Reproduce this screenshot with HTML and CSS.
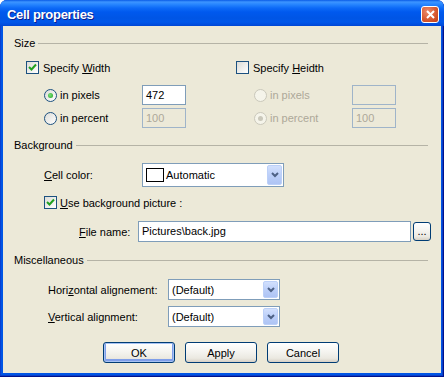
FILE: index.html
```html
<!DOCTYPE html>
<html lang="en">
<head>
  <meta charset="UTF-8">
  <title>Cell properties</title>
  <link rel="stylesheet" href="styles.css">
</head>
<body>
  <div class="window">
    <div class="titlebar">
      <span class="title">Cell properties</span>
      <span class="close-btn">
        <svg width="9" height="9" viewBox="0 0 9 9"><path d="M1 1L8 8M8 1L1 8" stroke="#fff" stroke-width="2"/></svg>
      </span>
    </div>

    <div class="client">
      <div class="group-head"><span>Size</span></div>
      <div class="size-grid">
        <div class="size-col">
          <div class="check-row">
            <span class="checkbox"><svg width="11" height="11" viewBox="0 0 11 11"><polyline points="2,5 4.5,7.5 9,2.5" fill="none" stroke="#21a121" stroke-width="2"/></svg></span>
            <span>Specify <u>W</u>idth</span>
          </div>
          <div class="radio-rows">
            <div class="radio-row">
              <span class="radio-label"><span class="radio"><span class="dot"></span></span>in pixels</span>
              <span class="textbox">472</span>
            </div>
            <div class="radio-row">
              <span class="radio-label"><span class="radio"></span>in percent</span>
              <span class="textbox disabled">100</span>
            </div>
          </div>
        </div>
        <div class="size-col">
          <div class="check-row">
            <span class="checkbox"></span>
            <span>Specify <u>H</u>eidth</span>
          </div>
          <div class="radio-rows off">
            <div class="radio-row">
              <span class="radio-label"><span class="radio"></span>in pixels</span>
              <span class="textbox disabled"></span>
            </div>
            <div class="radio-row">
              <span class="radio-label"><span class="radio"><span class="dot"></span></span>in percent</span>
              <span class="textbox disabled">100</span>
            </div>
          </div>
        </div>
      </div>

      <div class="group-head bg-head"><span>Background</span></div>
      <div class="form-row color-row">
        <span class="field-label color-label"><u>C</u>ell color:</span>
        <span class="combo color-combo">
          <span class="swatch"></span>
          <span class="combo-text">Automatic</span>
          <span class="combo-btn"><svg width="8" height="6" viewBox="0 0 8 6"><polyline points="1,1 4,4 7,1" fill="none" stroke="#4d6185" stroke-width="2"/></svg></span>
        </span>
      </div>
      <div class="check-row pic-row">
        <span class="checkbox"><svg width="11" height="11" viewBox="0 0 11 11"><polyline points="2,5 4.5,7.5 9,2.5" fill="none" stroke="#21a121" stroke-width="2"/></svg></span>
        <span><u>U</u>se background picture :</span>
      </div>
      <div class="form-row file-row">
        <span class="field-label file-label"><u>F</u>ile name:</span>
        <span class="textbox file-box">Pictures\back.jpg</span>
        <span class="btn browse-btn">...</span>
      </div>

      <div class="group-head misc-head"><span>Miscellaneous</span></div>
      <div class="form-row align-row">
        <span class="field-label align-label">Hori<u>z</u>ontal alignement:</span>
        <span class="combo align-combo">
          <span class="combo-text">(Default)</span>
          <span class="combo-btn"><svg width="8" height="6" viewBox="0 0 8 6"><polyline points="1,1 4,4 7,1" fill="none" stroke="#4d6185" stroke-width="2"/></svg></span>
        </span>
      </div>
      <div class="form-row align-row second">
        <span class="field-label align-label"><u>V</u>ertical alignment:</span>
        <span class="combo align-combo">
          <span class="combo-text">(Default)</span>
          <span class="combo-btn"><svg width="8" height="6" viewBox="0 0 8 6"><polyline points="1,1 4,4 7,1" fill="none" stroke="#4d6185" stroke-width="2"/></svg></span>
        </span>
      </div>

      <div class="buttons">
        <span class="btn default">OK</span>
        <span class="btn">Apply</span>
        <span class="btn">Cancel</span>
      </div>
    </div>
  </div>
</body>
</html>
```

FILE: styles.css
```css
body {
  margin: 0;
  background: #fff;
  font-family: "Liberation Sans", Arial, sans-serif;
  font-size: 11px;
  color: #000;
}

.window {
  width: 444px;
  height: 377px;
  display: flex;
  flex-direction: column;
  background: #0055e5;
  border-radius: 7px 7px 0 0;
  box-shadow: inset -1px -1px 0 #00138c, inset -2px -2px 0 #0a3fc9, inset 1px 0 0 #0a3fd0;
  overflow: hidden;
}

.titlebar {
  height: 26px;
  flex: none;
  display: flex;
  align-items: center;
  padding: 2px 5px 0 7px;
  box-sizing: border-box;
  background: linear-gradient(to bottom, #0a5be6 0, #3d95ff 2px, #2a88ff 4px, #0d6af7 8px, #0059ee 12px, #0055e5 18px, #0057ea 22px, #004cdc 25px, #0045d2 26px);
}

.title {
  flex: 1;
  color: #fff;
  font-weight: bold;
  font-size: 13px;
  letter-spacing: -0.3px;
  text-shadow: 1px 1px 0 #0f1e8a;
}

.close-btn {
  width: 18px;
  height: 17px;
  box-sizing: border-box;
  border: 1px solid #fff;
  border-radius: 3px;
  display: flex;
  align-items: center;
  justify-content: center;
  background: radial-gradient(circle at 35% 30%, #eb8b6c 0, #d85a32 55%, #c23e14 100%);
}

.client {
  flex: 1;
  margin: 0 3px 4px 3px;
  padding: 10px 13px 0 11px;
  background: #ece9d8;
  display: flex;
  flex-direction: column;
}

.group-head {
  height: 14px;
  display: flex;
  align-items: center;
  gap: 3px;
}

.group-head::after {
  content: "";
  flex: 1;
  border-top: 1px solid #b5b3a6;
  margin-top: 1px;
}

.bg-head {
  margin-top: 10px;
}

.misc-head {
  margin-top: 11px;
}

.size-grid {
  display: grid;
  grid-template-columns: 210px 1fr;
  padding-left: 12px;
  margin-top: 11px;
}

.check-row {
  height: 13px;
  display: flex;
  align-items: center;
  gap: 4px;
}

.checkbox {
  width: 13px;
  height: 13px;
  box-sizing: border-box;
  border: 1px solid #1c5180;
  background: linear-gradient(135deg, #dcdcd7 0, #fff 100%);
  display: flex;
  align-items: center;
  justify-content: center;
}

.radio-rows {
  margin-top: 11px;
  padding-left: 18px;
  display: grid;
  grid-auto-rows: 20px;
  row-gap: 3px;
}

.radio-row {
  display: flex;
  align-items: center;
}

.radio-label {
  width: 98px;
  display: flex;
  align-items: center;
  gap: 3px;
}

.radio {
  width: 13px;
  height: 13px;
  box-sizing: border-box;
  border: 1px solid #1c5180;
  border-radius: 50%;
  background: linear-gradient(135deg, #dcdcd7 0, #fff 100%);
  display: flex;
  align-items: center;
  justify-content: center;
}

.dot {
  width: 5px;
  height: 5px;
  border-radius: 50%;
  background: radial-gradient(circle at 40% 40%, #7be27a 0, #21a121 100%);
}

.off {
  color: #aca899;
}

.off .radio {
  border-color: #cac8bb;
  background: #f5f4ea;
}

.off .dot {
  background: #cac8bb;
}

.textbox {
  width: 44px;
  height: 20px;
  box-sizing: border-box;
  border: 1px solid #7f9db9;
  background: #fff;
  padding: 0 3px;
  line-height: 18px;
  white-space: nowrap;
}

.textbox.disabled {
  background: #ece9d8;
  border-color: #9fb4c9;
  color: #aca899;
}

.form-row {
  display: flex;
  align-items: center;
}

.form-row > * {
  flex: none;
  white-space: nowrap;
}

.color-row {
  margin-top: 11px;
  padding-left: 30px;
}

.color-label {
  width: 98px;
}

.combo {
  box-sizing: border-box;
  border: 1px solid #7f9db9;
  background: #fff;
  display: flex;
  align-items: center;
  padding: 1px;
}

.color-combo {
  width: 142px;
  height: 24px;
}

.swatch {
  width: 18px;
  height: 14px;
  box-sizing: border-box;
  border: 1px solid #000;
  background: #fff;
  margin: 0 2px 0 2px;
}

.combo-text {
  flex: 1;
}

.combo-btn {
  width: 15px;
  align-self: stretch;
  box-sizing: border-box;
  border: 1px solid #bcd0f8;
  border-radius: 2px;
  background: linear-gradient(to bottom, #d2e0fd 0, #bccff9 50%, #aec4f4 100%);
  display: flex;
  align-items: center;
  justify-content: center;
}

.pic-row {
  margin-top: 9px;
  padding-left: 30px;
  gap: 3px;
}

.file-row {
  margin-top: 12px;
  padding-left: 65px;
}

.file-label {
  width: 59px;
}

.file-box {
  width: 273px;
  height: 21px;
  line-height: 19px;
}

.align-row {
  margin-top: 12px;
  padding-left: 34px;
}

.align-row.second {
  margin-top: 6px;
}

.align-label {
  width: 120px;
}

.align-combo {
  width: 112px;
  height: 21px;
}

.align-combo .combo-text {
  padding-left: 2px;
}

.buttons {
  margin-top: 15px;
  display: flex;
  justify-content: center;
  gap: 10px;
}

.btn {
  width: 72px;
  height: 21px;
  box-sizing: border-box;
  border: 1px solid #003c74;
  border-radius: 3px;
  background: linear-gradient(to bottom, #fff 0, #f5f4f0 45%, #ebe9e1 80%, #d6d0c5 100%);
  display: flex;
  align-items: center;
  justify-content: center;
}

.btn.default {
  box-shadow: inset 0 0 0 1px #a6c2f3, inset 0 -1px 0 2px #7f9ee9;
}

.btn.browse-btn {
  width: 18px;
  height: 19px;
  margin-left: 2px;
  padding-bottom: 2px;
}
```
